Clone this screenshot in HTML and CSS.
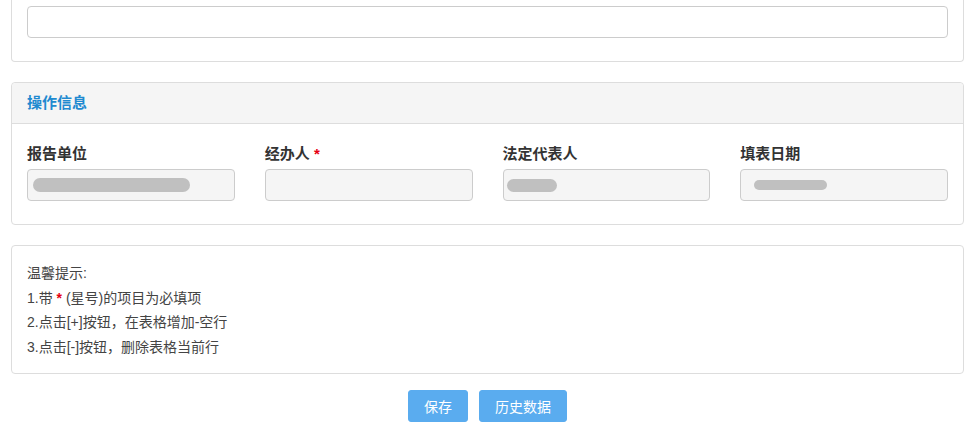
FILE: index.html
```html
<!DOCTYPE html>
<html lang="zh">
<head>
<meta charset="utf-8">
<link rel="stylesheet" href="styles.css">
</head>
<body>
<div class="page">
  <div class="panel panel-top">
    <div class="field-input"></div>
  </div>

  <div class="panel">
    <div class="panel-heading">操作信息</div>
    <div class="panel-body grid">
      <div class="field">
        <div class="label">报告单位</div>
        <div class="field-input disabled"><span class="blob blob1"></span></div>
      </div>
      <div class="field">
        <div class="label">经办人 <span class="req">*</span></div>
        <div class="field-input disabled"></div>
      </div>
      <div class="field">
        <div class="label">法定代表人</div>
        <div class="field-input disabled"><span class="blob blob2"></span></div>
      </div>
      <div class="field">
        <div class="label">填表日期</div>
        <div class="field-input disabled"><span class="blob blob3"></span></div>
      </div>
    </div>
  </div>

  <div class="panel tips">
    <div>温馨提示:</div>
    <div>1.带 <span class="req">*</span> (星号)的项目为必填项</div>
    <div>2.点击[+]按钮，在表格增加-空行</div>
    <div>3.点击[-]按钮，删除表格当前行</div>
  </div>

  <div class="actions">
    <button class="btn">保存</button>
    <button class="btn">历史数据</button>
  </div>
</div>
</body>
</html>
```

FILE: styles.css
```css
html, body {
  margin: 0;
  padding: 0;
  background: #fff;
  font-family: "Liberation Sans", "Noto Sans CJK SC", sans-serif;
  font-size: 14px;
  color: #333;
}
.page {
  margin: 0 13px 0 11px;
}
.panel {
  border: 1px solid #dddddd;
  border-radius: 4px;
  background: #fff;
  margin-bottom: 20px;
}
.panel-top {
  border-top: none;
  border-top-left-radius: 0;
  border-top-right-radius: 0;
  padding: 6px 15px 23px;
  margin-top: 0;
}
.field-input {
  height: 30px;
  border: 1px solid #cccccc;
  border-radius: 4px;
  background: #fff;
  display: flex;
  align-items: center;
  padding: 0 5px;
}
.field-input.disabled {
  background: #f5f5f5;
}
.panel-heading {
  background: #f5f5f5;
  border-bottom: 1px solid #dddddd;
  border-radius: 4px 4px 0 0;
  height: 40px;
  line-height: 40px;
  padding: 0 15px;
  color: #1f8ad0;
  font-weight: bold;
  font-size: 15px;
}
.panel-body {
  padding: 20px 15px 23px;
}
.grid {
  display: grid;
  grid-template-columns: repeat(4, 1fr);
  column-gap: 30px;
}
.label {
  font-weight: bold;
  font-size: 15px;
  line-height: 20px;
  height: 20px;
  margin-bottom: 5px;
  color: #333;
}
.req {
  color: #e60012;
  font-weight: bold;
}
.blob {
  display: block;
  background: #c0c0c0;
  border-radius: 7px;
}
.blob1 {
  width: 157px;
  height: 14px;
}
.blob2 {
  width: 50px;
  height: 13px;
  margin-left: -2px;
}
.blob3 {
  width: 73px;
  height: 10px;
  margin-left: 8px;
}
.tips {
  padding: 15px 15px 14px;
  line-height: 24.5px;
  color: #444;
}
.actions {
  display: flex;
  justify-content: center;
  gap: 11px;
  margin-top: -4px;
}
.btn {
  height: 32px;
  padding: 0 15px;
  border: 1px solid #5aacef;
  border-radius: 3px;
  background: #5aacef;
  color: #fff;
  font-family: "Liberation Sans", "Noto Sans CJK SC", sans-serif;
  font-size: 14px;
  cursor: pointer;
}
```
